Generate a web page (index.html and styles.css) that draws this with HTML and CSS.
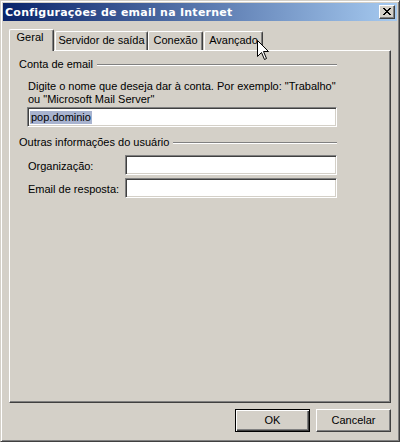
FILE: index.html
```html
<!DOCTYPE html>
<html lang="pt">
<head>
<meta charset="utf-8">
<title>Configurações de email na Internet</title>
<link rel="stylesheet" href="styles.css">
</head>
<body>
<div class="window">
  <div class="titlebar">
    <span class="title">Configurações de email na Internet</span>
    <span class="close">
      <svg width="8" height="7" viewBox="0 0 8 7" shape-rendering="crispEdges"><path fill="#000" d="M0 0h2v1H0z M6 0h2v1H6z M1 1h2v1H1z M5 1h2v1H5z M2 2h4v1H2z M3 3h2v1H3z M2 4h4v1H2z M1 5h2v1H1z M5 5h2v1H5z M0 6h2v1H0z M6 6h2v1H6z"/></svg>
    </span>
  </div>
  <div class="client">
    <div class="tabs">
      <div class="tab selected tab-geral">Geral</div>
      <div class="tab tab-servidor">Servidor de saída</div>
      <div class="tab tab-conexao">Conexão</div>
      <div class="tab tab-avancado">Avançado</div>
    </div>
    <div class="panel">
      <div class="group-head"><span class="group-label">Conta de email</span><span class="rule"></span></div>
      <p class="desc">Digite o nome que deseja dar à conta. Por exemplo: "Trabalho"<br>ou "Microsoft Mail Server"</p>
      <div class="field field-wide"><span class="sel">pop.dominio</span></div>
      <div class="group-head group-second"><span class="group-label">Outras informações do usuário</span><span class="rule"></span></div>
      <div class="row row-first"><span class="row-label">Organização:</span><div class="field field-short"></div></div>
      <div class="row"><span class="row-label">Email de resposta:</span><div class="field field-short"></div></div>
    </div>
    <div class="buttons">
      <div class="btn btn-default">OK</div>
      <div class="btn">Cancelar</div>
    </div>
  </div>
  <svg class="cursor" width="13" height="21" viewBox="0 0 13 21">
    <polygon points="0.5,0.5 0.5,16.5 4.5,12.5 7.5,19.5 9.5,18.5 6.5,11.5 11.5,11.5" fill="#fff" stroke="#000" stroke-width="1" stroke-linejoin="miter"/>
  </svg>
</div>
</body>
</html>
```
FILE: styles.css
```css
* { box-sizing: border-box; }

html, body {
  margin: 0;
  padding: 0;
  width: 400px;
  height: 442px;
  overflow: hidden;
  background: #d4d0c8;
}

body {
  font-family: "Liberation Sans", Arial, sans-serif;
  font-size: 11px;
  line-height: 13px;
  color: #000;
}

.window {
  position: relative;
  width: 400px;
  height: 442px;
  border: 1px solid;
  border-color: #d4d0c8 #404040 #404040 #d4d0c8;
  box-shadow: inset 1px 1px #fff, inset -1px -1px #808080;
  padding: 2px;
  display: flex;
  flex-direction: column;
  background: #d4d0c8;
}

.titlebar {
  height: 18px;
  flex: none;
  display: flex;
  align-items: center;
  padding: 0 2px 0 2px;
  background: linear-gradient(to right, #0a246a, #a6caf0);
}

.title {
  flex: 1;
  color: #fff;
  font-family: "DejaVu Sans", Verdana, sans-serif;
  font-weight: bold;
  font-size: 11px;
  letter-spacing: 0.25px;
  white-space: nowrap;
}

.close {
  width: 16px;
  height: 14px;
  border: 1px solid;
  border-color: #fff #404040 #404040 #fff;
  box-shadow: inset -1px -1px #808080;
  background: #d4d0c8;
  display: flex;
  align-items: center;
  justify-content: center;
  padding: 0 1px 1px 0;
}

.close svg { display: block; }

.client {
  flex: 1;
  display: flex;
  flex-direction: column;
  padding: 8px 6px 7px 6px;
}

.tabs {
  height: 21px;
  flex: none;
  display: flex;
  align-items: flex-end;
  position: relative;
  z-index: 2;
}

.tab {
  height: 19px;
  padding-top: 2px;
  border-top: 1px solid #fff;
  border-left: 1px solid #fff;
  border-right: 1px solid #404040;
  box-shadow: inset -1px 0 #808080;
  border-radius: 2px 2px 0 0;
  text-align: center;
  white-space: nowrap;
  background: #d4d0c8;
}

.tab.selected {
  height: 22px;
  padding-top: 1px;
  margin-bottom: -1px;
  padding-right: 3px;
}

.tab-geral { width: 45px; }
.tab-servidor { width: 93px; margin-left: 1px; }
.tab-conexao { width: 55px; }
.tab-avancado { width: 59px; margin-left: 1px; }

.panel {
  flex: 1;
  border: 1px solid;
  border-color: #fff #404040 #404040 #fff;
  box-shadow: inset -1px -1px #808080;
  padding: 7px 0 0 9px;
  position: relative;
  z-index: 1;
}

.group-head {
  width: 318px;
  height: 13px;
  display: flex;
  align-items: center;
  gap: 4px;
}

.group-label { white-space: nowrap; }

.rule {
  flex: 1;
  height: 2px;
  border-top: 1px solid #808080;
  border-bottom: 1px solid #fff;
}

.group-second { margin-top: 9px; }

.desc {
  margin: 9px 0 0 9px;
  white-space: nowrap;
}

.field {
  height: 20px;
  border: 1px solid;
  border-color: #808080 #fff #fff #808080;
  box-shadow: inset 1px 1px #404040, inset -1px -1px #d4d0c8;
  background: #fff;
  padding: 3px 1px 0 2px;
}

.field-wide {
  width: 310px;
  margin: 1px 0 0 8px;
}

.sel {
  display: inline-block;
  line-height: 13px;
  height: 13px;
  background: #a8b3cf;
  padding: 0 1px 0 1px;
}

.row {
  display: flex;
  align-items: center;
  margin: 3px 0 0 9px;
}

.row-first { margin-top: 6px; }

.row-label {
  width: 97px;
  padding-top: 2px;
}

.field-short { width: 212px; }

.buttons {
  flex: none;
  display: flex;
  justify-content: flex-end;
  gap: 6px;
  margin-top: 6px;
}

.btn {
  width: 75px;
  height: 23px;
  border: 1px solid;
  border-color: #fff #404040 #404040 #fff;
  box-shadow: inset -1px -1px #808080;
  background: #d4d0c8;
  display: flex;
  align-items: center;
  justify-content: center;
}

.btn-default {
  border-color: #000;
  box-shadow: inset 1px 1px #fff, inset -1px -1px #404040, inset -2px -2px #808080;
}

.cursor {
  position: absolute;
  left: 256px;
  top: 39px;
  z-index: 5;
}
```
